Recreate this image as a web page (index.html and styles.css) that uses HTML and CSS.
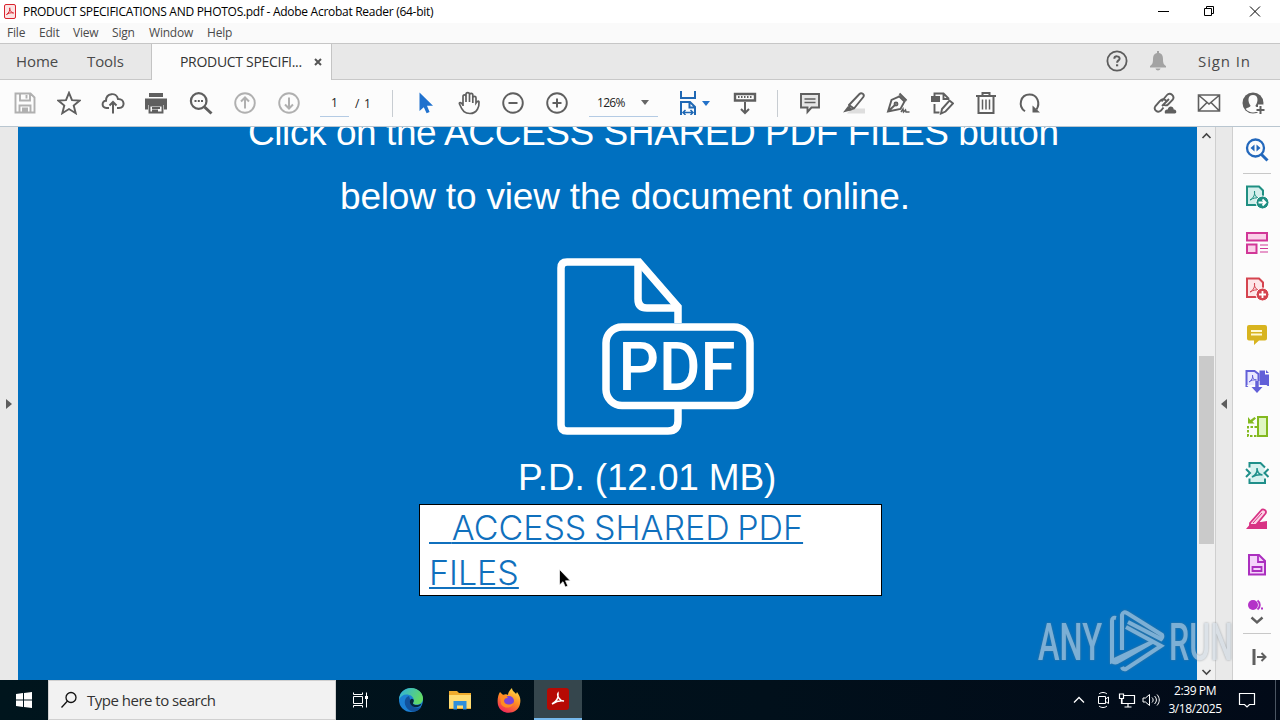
FILE: index.html
```html
<!DOCTYPE html>
<html lang="en">
<head>
  <meta charset="UTF-8" />
  <title>PRODUCT SPECIFICATIONS AND PHOTOS.pdf - Adobe Acrobat Reader (64-bit)</title>
  <link rel="stylesheet" href="styles.css">
</head>
<body>
  <div class="titlebar">
    <svg class="app-icon" width="12" height="15" viewBox="0 0 12 15"><rect x=".5" y=".5" width="11" height="14" rx="1.5" fill="#fbe4e4" stroke="#d9232e"/><path d="M2.5 10.5C5 9 6.2 6 5.8 3.8c-.8.5.5 4.500 3.800 5.200C7 8.400 4.500 9 2.500 10.500z" fill="none" stroke="#d9232e"/></svg>
    <span class="title-text">PRODUCT SPECIFICATIONS AND PHOTOS.pdf - Adobe Acrobat Reader (64-bit)</span>
    <div class="window-buttons">
      <svg width="46" height="22"><path d="M18 10.500h11" stroke="#000"/></svg>
      <svg width="46" height="22"><path d="M18.500 7.500h7v7h-7zM20.500 7v-1.500h7v7h-1.500" fill="none" stroke="#000"/></svg>
      <svg width="46" height="22"><path d="M18 5.500l10 10M28 5.500l-10 10" stroke="#000"/></svg>
    </div>
  </div>

  <div class="menubar">
    <span class="m-file">File</span><span class="m-edit">Edit</span><span class="m-view">View</span><span class="m-sign">Sign</span><span class="m-window">Window</span><span class="m-help">Help</span>
  </div>

  <div class="tabs">
    <span class="tab-home">Home</span>
    <span class="tab-tools">Tools</span>
    <div class="tab-doc">
      <span>PRODUCT SPECIFI...</span>
      <svg width="8" height="8"><path d="M1 1l6 6M7 1L1 7" stroke="#555" stroke-width="2"/></svg>
    </div>
    <div class="tabs-right">
      <svg width="22" height="22" viewBox="0 0 22 22"><circle cx="11" cy="11" r="9.600" fill="none" stroke="#5d5d5d" stroke-width="1.800"/><path d="M8.300 8.700c.2-3.200 5.500-3 5.300 0-.1 1.700-2.500 1.800-2.500 4" fill="none" stroke="#5d5d5d" stroke-width="2"/><path d="M10 14.300h2.200v2H10z" fill="#5d5d5d"/></svg>
      <svg class="bell" width="18" height="20" viewBox="0 0 18 20"><path d="M8 0h2v2c3 .5 4 3 4 6 0 4 .6 5.500 3 7v1.500H1V15c2.400-1.500 3-3 3-7 0-3 1-5.500 4-6zM6.500 17.500h5c-.5 2.500-4.500 2.500-5 0z" fill="#a3a3a3"/></svg>
      <span class="sign-in">Sign In</span>
    </div>
  </div>

  <div class="toolbar">
    <div class="tools">
      <svg class="off" viewBox="0 0 24 24"><path d="M2.500 2.500h15l4 4v15h-19zM7 2.500v7h10v-7M13.500 4v3.500M6.500 21.500v-7h11v7M9 17.500h6M9 19.500h6"/></svg>
      <svg viewBox="0 0 24 24"><path d="M12 1.800l3 7.300 7.700.5-6 5 2 7.600L12 18l-6.700 4.200 2-7.600-6-5 7.700-.5z"/></svg>
      <svg viewBox="0 0 24 24"><path d="M8 17H5.500C.3 16.500.5 9.800 5 9.800 5 1.500 15.500 1 17 8c7-.3 7.500 9 1 9h-2M12 22.500v-11M8.500 14.500L12 11l3.500 3.500" stroke-width="2"/></svg>
      <svg class="print" viewBox="0 0 24 24"><path d="M5 2h14v4H5zM1 7.500h22v11h-3V14H4v4.500H1z" fill="#5f5f5f" stroke="none"/><path d="M5.500 14.500h13v7h-13zM8 17h8M8 19.500h6"/></svg>
      <svg viewBox="0 0 24 24"><circle cx="9.700" cy="10" r="7.800" stroke-width="2.200"/><path d="M15.500 16l7 6.500" stroke-width="3"/><path d="M5.500 10h2M8.800 10h2M12 10h2" stroke-width="2"/></svg>
      <svg class="off" viewBox="0 0 24 24"><circle cx="12" cy="12" r="9.800"/><path d="M12 17.500v-11M8 10.500l4-4 4 4" stroke-width="2"/></svg>
      <svg class="off" viewBox="0 0 24 24"><circle cx="12" cy="12" r="9.800"/><path d="M12 6.500v11M8 13.500l4 4 4-4" stroke-width="2"/></svg>
    </div>
    <div class="page-box">1</div>
    <span class="page-total">/ 1</span>
    <i class="sep"></i>
    <div class="tools">
      <svg viewBox="0 0 24 24"><path d="M6.500 1.500v18.500l4.300-3.700 2.800 6 3-1.300-2.600-6.200h6z" fill="#1f71ce" stroke="none"/></svg>
      <svg viewBox="0 0 24 24"><path d="M6.500 15V5.500c0-2.300 3-2.300 3 0V11 3.300c0-2.300 3.500-2.300 3.500 0V11 4c0-2.300 3.300-2.300 3.300 0v8V6.800c0-2 3.200-2 3.200 0V12c0 0 2.500-3.500 3-1 .3 4-1.500 11.500-9 11.500-5 0-7.500-2-10.500-9.500-.7-2 1.500-2.200 3.500 1" stroke-width="1.700" transform="translate(-.5 0)"/></svg>
      <svg viewBox="0 0 24 24"><circle cx="12" cy="12" r="9.800"/><path d="M7.500 12h9" stroke-width="2"/></svg>
      <svg viewBox="0 0 24 24"><circle cx="12" cy="12" r="9.800"/><path d="M7.500 12h9M12 7.500v9" stroke-width="2"/></svg>
    </div>
    <div class="zoom-box"><span>126%</span><i class="caret"></i></div>
    <div class="fit">
      <svg viewBox="0 0 24 24"><path d="M5 0v7h14V0M5 24V11h9l5 5v8M13.500 11v5.500H19" stroke="#2068b4" stroke-width="2"/><path d="M7.500 21.500h9M9.500 19l-2.500 2.500L9.500 24M14.500 19l2.500 2.500-2.500 2.500" stroke="#2068b4" stroke-width="1.500"/></svg>
      <i class="caret blue"></i>
    </div>
    <svg class="read" viewBox="0 0 24 24"><path d="M2 3h20v6.500H2z" stroke-width="2.400"/><path d="M5 6h14" stroke-dasharray="1.500 1.500"/><path d="M12 11v10.500M8 18l4 4 4-4" stroke-width="2"/></svg>
    <i class="sep sep-2"></i>
    <div class="tools">
      <svg viewBox="0 0 24 24"><path d="M3 3h18v13.500h-7.500L9.500 21v-4.500H3z" fill="#e6e6e6"/><path d="M6.500 8h11M6.500 11.500h11" stroke-width="1.400"/></svg>
      <svg viewBox="0 0 24 24"><path d="M9 17.500h14v5H5z" fill="#dedede" stroke="none"/><path d="M7 14L17.500 3c2-2 5.500.5 3.800 3L12 17.500l-4 1zM7 14l5 3.500"/><path d="M6 15l4.500 4L1 21.500z" fill="#5f5f5f" stroke="none"/></svg>
      <svg viewBox="0 0 24 24"><path d="M13.500 2.500l8 7-2.500 2-7.500-6.500z" fill="#d8d8d8" stroke="none"/><path d="M13.500 2.500l7 7M2 20.500L5.500 9l8-3.500 5 5-4 7.500zM2 20.500l7.500-7"/><circle cx="10" cy="13" r="1.500"/><path d="M15 21l2-3 .5 3 2-2 .5 2h3.500" stroke-width="1.500"/></svg>
      <svg viewBox="0 0 24 24"><path d="M1 5h9v6H1z" fill="#5f5f5f" stroke="none"/><path d="M4.500 6V2.500h9L19 8M13.500 2.500V8H19M4.500 13v8.500h5"/><path d="M12 18l7.500-8.500 3.500 3-7.500 8-4.500 2z"/></svg>
      <svg viewBox="0 0 24 24"><path d="M2 5h20M8.500 5V2h7v3M4.500 5.500v16.500h15V5.500" stroke-width="2"/><path d="M8.500 8.500v10M12 8.500v10M15.500 8.500v10" stroke-width="1.500"/></svg>
      <svg viewBox="0 0 24 24"><path d="M7 20.300C-.5 15 2.500 3.500 11.500 3.500c8 0 11 8.500 7 15" stroke-width="2"/><path d="M14.500 14.500v7H22z" fill="#5f5f5f" stroke="none"/></svg>
    </div>
    <div class="tools tools-end">
      <svg viewBox="0 0 24 24"><path d="M9 15L16 8M8.500 10.500L14 4c3-3.500 8.500 1 5.500 5L15 13.500c-1.500 1.500-4 1-5-.5M13 9.500c-2-2-4.500-1.500-6 .5l-4.500 5c-2.500 3.500 2 7.500 5.500 4.500l2.500-3" /><path d="M12 22.500c-1-3 1-4.500 2.700-4 .8-4.500 6-3.500 6 0 3-.5 3.500 4 1 4z" fill="#5f5f5f" stroke="none"/></svg>
      <svg viewBox="0 0 24 24"><path d="M1.500 4h21v16h-21zM2 4.500l10 8.500 10-8.500M2 19.500l8-8M22 19.500l-8-8" stroke-width="1.600"/></svg>
      <svg viewBox="0 0 24 24"><circle cx="12" cy="12" r="10.500" fill="#5f5f5f" stroke="none"/><path d="M12 4c-5.500 0-5.500 6.500-2.500 10.500 0 2-3.500 2-4.800 3.500 3.500 4.500 11 4.500 14.500 0-1.200-1.500-4.700-1.500-4.700-3.500C17.500 10.500 17.500 4 12 4z" fill="#fcfcfc" stroke="none"/><path d="M19.500 13.500v10M14.500 18.500h9.500" stroke="#fcfcfc" stroke-width="5"/><path d="M19.500 15v8M15.500 19h8" stroke-width="2"/></svg>
    </div>
  </div>

  <div class="main">
    <div class="left-strip"><i class="arrow-right"></i></div>

    <div class="document">
      <p class="line-1">Click on the ACCESS SHARED PDF FILES button</p>
      <p class="line-2">below to view the document online.</p>
      <svg class="pdf-icon" width="200" height="180" viewBox="0 0 200 180">
        <g fill="none" stroke="#fff" stroke-width="7.500">
          <path d="M122 66V50L83 5H11q-6 0-6 6v157q0 6 6 6h101q10 0 10-10v-15"/>
          <path d="M82 5v37q0 9 9 9h31"/>
          <rect x="50" y="70" width="144" height="78.500" rx="16"/>
        </g>
        <text x="62.500" y="132.500" textLength="117" lengthAdjust="spacingAndGlyphs">PDF</text>
      </svg>
      <p class="file-size">P.D. (12.01 MB)</p>
      <a class="access"><span class="lead">&nbsp;&nbsp;</span><span class="access-1">ACCESS SHARED PDF</span><br><span class="access-2">FILES</span></a>
    </div>

    <div class="scrollbar">
      <svg width="18" height="18"><path d="M5.500 11l4-4 4 4" fill="none" stroke="#444" stroke-width="1.600"/></svg>
      <div class="thumb"></div>
      <svg class="down" width="18" height="18"><path d="M5.500 8l4 4 4-4" fill="none" stroke="#444" stroke-width="1.600"/></svg>
    </div>
    <div class="right-strip"><i class="arrow-left"></i></div>

    <div class="panel">
      <svg viewBox="0 0 24 24"><circle cx="10.500" cy="10" r="8.500" stroke="#2368bc" stroke-width="2.300"/><path d="M16.500 16.500l6 6" stroke="#2368bc" stroke-width="3"/><path d="M9.500 6.500v7L5.500 10zM11.500 6.500v7l4-3.500z" fill="#2368bc"/></svg>
      <i class="rule"></i>
      <svg viewBox="0 0 24 24"><path d="M2 1.500h12l4 4V20H2z" fill="#d5efec" stroke="#1f8f82" stroke-width="2"/><path d="M5 15c4-2 5-6 4.500-9C9 10 11 13 15 13c-4-.5-7 0-10 2z" stroke="#1f8f82"/><circle cx="17.500" cy="17.500" r="6.500" fill="#1f8f82" stroke="#fff"/><path d="M13.500 17.500h7M17.500 14.500l3 3-3 3" stroke="#fff" stroke-width="1.800"/></svg>
      <svg viewBox="0 0 24 24"><path d="M2 2h20v7.500H2zM2 13.500h9.500V22H2z" fill="#fbd0e9" stroke="#d13797" stroke-width="2"/><path d="M15 14h8M15 17.500h8M15 21h8" stroke="#d13797"/></svg>
      <svg viewBox="0 0 24 24"><path d="M2 1.500h12l4 4V20H2z" fill="#fde6e8" stroke="#d5444f" stroke-width="2"/><path d="M5 15c4-2 5-6 4.500-9C9 10 11 13 15 13c-4-.5-7 0-10 2z" stroke="#d5444f"/><circle cx="17.500" cy="17.500" r="6.500" fill="#d5444f" stroke="#fff"/><path d="M14 17.500h7M17.500 14v7" stroke="#fff" stroke-width="1.800"/></svg>
      <svg viewBox="0 0 24 24"><path d="M4 2h16q2 0 2 2v11.500q0 2-2 2h-6L9 22v-4.500H4q-2 0-2-2V4q0-2 2-2z" fill="#d8b41f"/><path d="M6 8h11M6 11.500h11" stroke="#fff8d0" stroke-width="1.800"/></svg>
      <svg viewBox="0 0 24 24"><path d="M1.500 2h8l4 3v12h-12z" fill="#e9e8ff" stroke="#6260d8" stroke-width="2"/><path d="M4 13c3-2 4-4 3.500-7 0 3 1 5 4 5-3-.3-5 0-7.500 2z" stroke="#6260d8"/><path d="M14.500 1.500H20v4h4V17h-9.500zM21 1l3 3h-3z" fill="#6260d8"/><path d="M12 12v10M7.500 18.500l4.500 4.500 4.500-4.500z" stroke="#fcfcfc" stroke-width="5"/><path d="M12 12v8" stroke="#6260d8" stroke-width="3.500"/><path d="M6.500 18h11L12 24z" fill="#6260d8"/></svg>
      <svg viewBox="0 0 24 24"><path d="M13 2h9v19h-9z" fill="#e0f6c3" stroke="#83b91f" stroke-width="2"/><path d="M12 12H3v9h9" stroke="#83b91f" stroke-width="2" stroke-dasharray="2.500 1.500"/><path d="M3 2v6.500h6.500L7.500 6.500 11 3.500 9.500 2 5.500 5z" fill="#83b91f"/></svg>
      <svg viewBox="0 0 24 24"><path d="M5.500 3h10l4 4v14h-14z" fill="#d6f1ef"/><path d="M4.500 6.500V2h11l4.500 4.500M4.500 17.500V22H20v-4.500M1 8l4 4-4 4M23.500 8l-4 4 4 4" stroke="#1f8f8a" stroke-width="2"/><path d="M7 16c4-2 5.500-5 5-9 0 4 2 6.500 5.500 7-4-.5-7 0-10.500 2z" stroke="#1f8f8a" stroke-width="1.500"/></svg>
      <svg viewBox="0 0 24 24"><path d="M1 22l6-7h9l6-1v8z" fill="#d83284"/><path d="M5 16L16 3.500c2-2.500 6.500 0 4.500 3L11 18H5z" fill="#fcd3e6" stroke="#d83284" stroke-width="1.800"/><path d="M8 16l9-10" stroke="#d83284"/></svg>
      <svg viewBox="0 0 24 24"><path d="M4 2h10l6 6v13.500H4z" fill="#f4d4fa" stroke="#ab2fbf" stroke-width="2"/><path d="M13 2v7h7M7.500 14h9v4h-9z" stroke="#ab2fbf" stroke-width="1.800"/></svg>
      <svg class="cut" viewBox="0 0 24 12"><circle cx="8" cy="6" r="5" fill="#b432c8"/><path d="M12.500 1.500c3 2 3 7 0 9" stroke="#b432c8" stroke-width="2"/><path d="M16 9.500h2" stroke="#b432c8" stroke-width="2"/></svg>
      <svg class="chevron" viewBox="0 0 24 12"><path d="M6.500 3.500L12 8.500l5.500-5" stroke="#5f5f5f" stroke-width="2.400"/></svg>
      <i class="rule rule-2"></i>
      <svg class="collapse" viewBox="0 0 24 24"><path d="M9 4v16" stroke="#5f5f5f" stroke-width="3"/><path d="M12 12h8.500M16.500 8l4 4-4 4" stroke="#5f5f5f" stroke-width="2"/></svg>
    </div>
  </div>

  <div class="taskbar">
    <div class="start"><svg width="16" height="16"><path d="M0 2l7-1v6.500H0zM8 .900L16 0v7.500H8zM0 8.500h7V15l-7-1zM8 8.500h8V16l-8-1z" fill="#fff"/></svg></div>
    <div class="search">
      <svg width="18" height="18" viewBox="0 0 18 18"><circle cx="11" cy="6.500" r="5" fill="none" stroke="#111" stroke-width="1.300"/><path d="M7.500 10L1.500 16.500" stroke="#111" stroke-width="1.300"/></svg>
      <span>Type here to search</span>
    </div>
    <div class="task task-view"><svg width="16" height="16" viewBox="0 0 16 16"><path d="M1.500 4.500h9v7h-9zM1.500 .5v2h9v-2M1.500 15.500v-2h9v2M14.500 .5v15" fill="none" stroke="#fff"/><path d="M13 4h3v3h-3z" fill="#fff"/></svg></div>
    <div class="task"><svg width="26" height="26" viewBox="0 0 26 26">
      <defs>
        <linearGradient id="edgeTop" x2="1" y2=".4"><stop stop-color="#2daee5"/><stop offset="1" stop-color="#62da65"/></linearGradient>
        <linearGradient id="foxBody" x1=".8" y1="0" x2=".3" y2="1"><stop stop-color="#ffe14a"/><stop offset=".5" stop-color="#ff8a22"/><stop offset="1" stop-color="#f0265b"/></linearGradient>
      </defs>
      <circle cx="13" cy="13" r="12" fill="#1b80d4"/><path d="M11 9c-6 2-6 12 3 15.500 4 .5 7-1 9.500-4.500-5 2-10 0-10.500-5z" fill="#12529c"/><path d="M1 12.500C1.500 5 7 1 13 1c8 0 12 6 12 10.500 0 5-4 6.500-8 6-3-.5-1.500-2-1.200-3.500C16 9.500 12 7.500 8.500 7.500 5 7.500 2.500 9.500 1 12.500z" fill="url(#edgeTop)"/><path d="M12.500 12.500c1-1.500 3.500-.5 3.300 1.500-.3 1.500-1.800 2.500.2 3.500 2.500 1 5.500.5 7.500-1-.5 2.500-3 3.700-5.500 3.700-4.500 0-7.500-4.500-5.500-7.700z" fill="#06263c"/></svg></div>
    <div class="task"><svg width="22" height="20" viewBox="0 0 22 20"><path d="M0 1h8l2 2h12v16H0z" fill="#efab2d"/><path d="M0 5h22v13H0z" fill="#ffdc73"/><path d="M4.500 11h13v8.500h-3.500v-4H8v4H4.500z" fill="#2f8fdb"/></svg></div>
    <div class="task"><svg width="24" height="25" viewBox="0 0 24 25"><path d="M3 4l3 3c2-1 4-1 5 0 0-3 2-5 4-7 0 3 3 4 4 6l1-2c3 4 4 7 3 12-2 11-19 12-22 1C0 12 1 7 3 4z" fill="url(#foxBody)"/><circle cx="12" cy="13" r="5" fill="#7b43d7"/><path d="M3 7c4-1 6 0 8 3-3 0-4 1-4 3 0 4 7 5 10 1-1 6-9 8-13 2z" fill="#ff8b22"/></svg></div>
    <div class="task active"><svg width="22" height="22" viewBox="0 0 22 22"><rect width="22" height="22" rx="3" fill="#b60a04"/><path d="M5 16c4-2 6.500-6 6-10.500C10 7 12 13 17 13c-4-.7-8 .5-12 3z" fill="none" stroke="#fff" stroke-width="1.500"/></svg></div>
    <div class="tray">
      <svg viewBox="0 0 20 20"><path d="M5 12.500l5-5 5 5" stroke-width="1.300"/></svg>
      <svg viewBox="0 0 20 20"><path d="M5.500 6.500h7v7h-7zM12.500 9l3-2v6.500l-3-2M6 4c2-2 6-2 8 0M6 16c2 2 6 2 8 0"/></svg>
      <svg viewBox="0 0 20 20"><path d="M6 5.500h11.500v8H5V9M11 13.500v3.500M7.500 17h7M2.500 4h4v4.500h-4zM4.500 8.500V14" stroke-width="1.200"/></svg>
      <svg viewBox="0 0 20 20"><path d="M2 8h2.500l4-3.500v11l-4-3.500H2zM11 7.500c1.500 1.500 1.500 3.500 0 5M13.500 6c2.500 2.500 2.500 5.500 0 8M16 4.500c3 3.500 3 7.500 0 11"/></svg>
    </div>
    <div class="clock">2:39 PM<br>3/18/2025</div>
    <svg class="notice" width="18" height="18"><path d="M1.500 2.500h15v11h-5L9 16l-2.500-2.500h-5z" fill="none" stroke="#fff" stroke-width="1.200"/></svg>
    <i class="peek"></i>
  </div>

  <svg class="pointer" width="12" height="19" viewBox="0 0 12 19"><path d="M.5.500v15.500l3.500-3.300 2.300 5.300 2.500-1.100-2.300-5.100h4.800z" fill="#000" stroke="#fff" stroke-width=".7"/></svg>

  <svg class="watermark" width="200" height="66" viewBox="0 0 200 66">
    <text x="2" y="52" textLength="64" lengthAdjust="spacingAndGlyphs">ANY</text>
    <text x="133" y="52" textLength="64" lengthAdjust="spacingAndGlyphs">RUN</text>
    <path d="M80 10q-4-1-4 3v40l38-18M86 42V7q1-4 5-2l35 22q1 2-1 4L92 14M90 19l35 19-35 23q-3 1-4-2M76 53q3 3 7 0l35-20"/>
  </svg>
</body>
</html>
```
FILE: styles.css
```css
* { box-sizing: border-box; }
body {
  margin: 0;
  width: 1280px;
  height: 720px;
  overflow: hidden;
  display: flex;
  flex-direction: column;
  font-family: "Open Sans", sans-serif;
  color: #4a4a4a;
  background: #fff;
}
svg {
  display: block;
  flex: none;
}
p { margin: 0; }

/* title + menu */
.titlebar {
  height: 23px;
  display: flex;
  align-items: center;
  padding-left: 4px;
  background: #fff;
}
.title-text {
  margin-left: 7px;
  font-size: 12px;
  letter-spacing: -0.28px;
  color: #000;
  white-space: nowrap;
}
.window-buttons {
  display: flex;
  margin-left: auto;
  margin-right: 2px;
}
.menubar {
  height: 21px;
  display: flex;
  align-items: center;
  padding: 0 0 2px 7px;
  font-size: 12px;
  letter-spacing: -0.2px;
  background: #fafafa;
  border-bottom: 1px solid #c6c6c6;
}
.m-file { width: 32px; }
.m-edit { width: 34px; }
.m-view { width: 39px; }
.m-sign { width: 37px; }
.m-window { width: 58px; }

/* tabs */
.tabs {
  height: 36px;
  display: flex;
  align-items: center;
  background: #e8e8e8;
  border-bottom: 1px solid #c8c8c8;
  font-size: 15px;
}
.tab-home {
  width: 87px;
  padding-left: 16px;
}
.tab-tools { width: 64px; }
.tab-home, .tab-tools {
  padding-bottom: 2px;
  letter-spacing: -0.1px;
}
.tab-doc {
  width: 181px;
  height: 36px;
  display: flex;
  align-items: center;
  justify-content: space-between;
  padding: 0 9px 0 28px;
  font-size: 14px;
  letter-spacing: -0.3px;
  color: #333;
  background: #fcfcfc;
  border-left: 1px solid #c4c4c4;
  border-right: 1px solid #c4c4c4;
}
.tabs-right {
  display: flex;
  align-items: center;
  margin-left: auto;
  padding: 0 25px 2px 0;
}
.bell { margin-left: 21px; }
.sign-in {
  margin-left: 31px;
  letter-spacing: 0.9px;
  width: 57px;
  white-space: nowrap;
}

/* toolbar */
.toolbar {
  height: 47px;
  display: flex;
  align-items: center;
  padding: 0 5px 0 3px;
  background: #fcfcfc;
  border-bottom: 1px solid #b9c6d0;
  font-size: 12px;
  color: #222;
}
.toolbar svg {
  width: 24px;
  height: 24px;
  fill: none;
  stroke: #5f5f5f;
  stroke-width: 1.9;
}
.toolbar svg.off { stroke: #b0b0b0; }
.tools { display: flex; }
.tools svg { margin: 0 10px; }
.tools svg.print { margin: 0 11px 0 9px; }
.page-box {
  width: 29px;
  height: 27px;
  margin-left: 9px;
  line-height: 26px;
  text-align: center;
  border-bottom: 1px solid #b4cbe4;
}
.page-total {
  margin-left: 6px;
  width: 37px;
  word-spacing: 1.5px;
}
.sep {
  width: 1px;
  height: 27px;
  margin-right: 10px;
  background: #c8cdd2;
}
.zoom-box {
  width: 69px;
  height: 27px;
  margin-left: 10px;
  padding: 0 9px 0 8px;
  display: flex;
  align-items: center;
  justify-content: space-between;
  letter-spacing: -0.7px;
  border-bottom: 1px solid #b4cbe4;
}
.caret {
  border: 4px solid transparent;
  border-top: 5px solid #666;
  border-bottom: 0;
}
.caret.blue { border-top-color: #2372c9; }
.fit {
  display: flex;
  align-items: center;
  margin-left: 18px;
}
.fit .caret { margin-left: 2px; }
.toolbar .read { margin-left: 23px; }
.sep-2 {
  margin-left: 20px;
  margin-right: 10px;
}
.tools-end { margin-left: auto; }

/* page area */
.main {
  height: 553px;
  display: grid;
  grid-template-columns: 18px 1179px 18px 18px 47px;
}
.left-strip, .right-strip {
  display: flex;
  align-items: center;
  background: #e9e9e9;
}
.right-strip {
  border-left: 1px solid #cfcfcf;
  border-right: 1px solid #cfcfcf;
}
.arrow-right {
  margin-left: 6px;
  border: 5px solid transparent;
  border-left: 6px solid #5d5d5d;
  border-right: 0;
}
.arrow-left {
  margin-left: 5px;
  border: 5px solid transparent;
  border-right: 6px solid #5d5d5d;
  border-left: 0;
}
.document {
  height: 553px;
  overflow: hidden;
  background: #0070c0;
  color: #fff;
  font-family: "Liberation Sans", Arial, sans-serif;
  font-size: 37px;
  line-height: 64px;
  white-space: nowrap;
}
.line-1 {
  margin-top: -26px;
  padding-left: 230px;
  letter-spacing: -0.42px;
}
.line-2 {
  padding-left: 322px;
  letter-spacing: -0.18px;
}
.pdf-icon {
  margin: 28px 0 0 538px;
}
.pdf-icon text {
  font-family: Roboto, sans-serif;
  font-size: 66px;
  font-weight: 500;
  fill: #fff;
}
.file-size {
  padding-left: 500px;
  margin-top: 9px;
  letter-spacing: -0.15px;
}
.access {
  display: block;
  width: 463px;
  height: 92px;
  margin: -6px 0 0 401px;
  padding: 0 9px;
  border: 1px solid #000;
  background: #fff;
  color: #1070bd;
  font-family: Inter, sans-serif;
  font-size: 34px;
  font-weight: 350;
  line-height: 45px;
  text-decoration: underline;
  text-decoration-thickness: 2px;
  text-underline-offset: 2px;
}
.lead { letter-spacing: 1.8px; }
.access-1 {
  letter-spacing: 0;
  word-spacing: -2px;
}

.scrollbar {
  display: flex;
  flex-direction: column;
  background: #f0f0f0;
}
.thumb {
  width: 15px;
  height: 188px;
  margin: 211px 0 0 2px;
  background: #cacaca;
}
.scrollbar .down { margin-top: auto; }

/* tools on the right */
.panel {
  display: flex;
  flex-direction: column;
  align-items: center;
  padding-top: 11px;
  gap: 22px;
  background: #fcfcfc;
}
.panel svg {
  width: 24px;
  height: 24px;
  fill: none;
}
.panel .rule {
  width: 28px;
  height: 1px;
  margin: -11px 0 -11px;
  background: #c8c8c8;
}
.panel .cut {
  height: 12px;
  margin-top: 0;
}
.panel .chevron {
  height: 12px;
  margin-top: -19px;
}
.panel .rule-2 { margin: -15px 0 -11px; }
.panel .collapse { margin-top: 0; }

/* taskbar */
.taskbar {
  height: 40px;
  display: flex;
  align-items: center;
  background: linear-gradient(90deg, #00151d, #01101b 60%, #020a18);
}
.start {
  width: 48px;
  padding-left: 16px;
}
.search {
  width: 288px;
  height: 40px;
  display: flex;
  align-items: center;
  padding-left: 11px;
  background: #f2f2f2;
  border: 1px solid #d0d0d0;
  color: #333;
  font-size: 15px;
}
.search span {
  margin-left: 9px;
  letter-spacing: -0.5px;
}
.task {
  width: 49px;
  height: 40px;
  display: flex;
  align-items: center;
  justify-content: center;
}
.task-view {
  width: 51px;
  padding-right: 4px;
}
.task:not(.task-view):not(.active) { padding-right: 2px; }
.task.active {
  width: 48px;
  padding-right: 1px;
  background: #35464d;
  border-bottom: 2px solid #76b9ed;
}
.tray {
  display: flex;
  gap: 4px;
  margin-left: auto;
}
.tray svg {
  width: 20px;
  height: 20px;
  fill: none;
  stroke: #fff;
}
.clock {
  width: 68px;
  text-align: center;
  font-size: 12px;
  line-height: 18px;
  letter-spacing: -0.4px;
  color: #fff;
}
.notice { margin: 0 19px 0 9px; }
.peek {
  width: 1px;
  height: 40px;
  margin-right: 4px;
  background: #4b5562;
}

/* overlays */
.pointer {
  position: absolute;
  left: 559px;
  top: 569px;
}
.watermark {
  position: absolute;
  left: 1036px;
  top: 608px;
  opacity: 0.6;
  filter: drop-shadow(0 0 1px #6f7880);
}
.watermark text {
  font-family: Roboto, sans-serif;
  font-size: 52px;
  font-weight: 500;
  fill: #cfdae3;
}
.watermark path {
  fill: none;
  stroke: #cfdae3;
  stroke-width: 4;
}
```
